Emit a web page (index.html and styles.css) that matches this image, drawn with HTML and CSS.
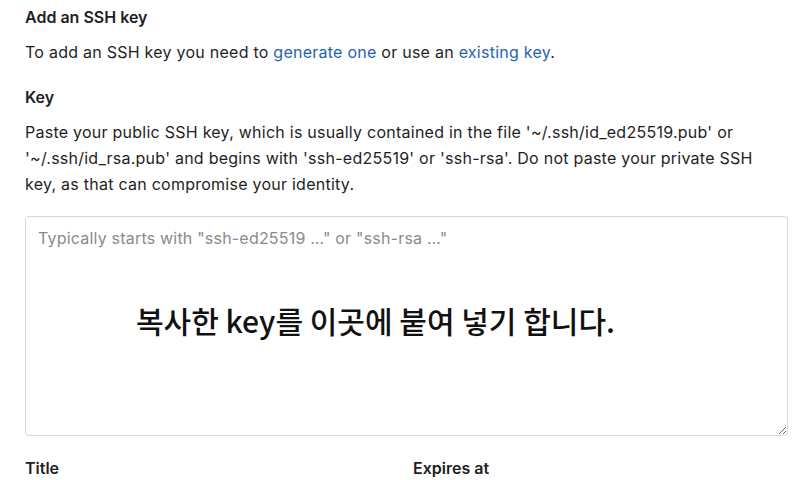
FILE: index.html
```html
<!DOCTYPE html>
<html lang="en">
<head>
    <meta charset="UTF-8">
    <meta name="viewport" content="width=device-width, initial-scale=1.0">
    <title>Add an SSH key</title>
    <link rel="stylesheet" href="styles.css">
</head>
<body>
    <div class="container">
        <h3 class="section-title">Add an SSH key</h3>
        <p class="intro">To add an SSH key you need to <a href="#">generate one</a> or use an <a href="#">existing key</a>.</p>

        <div class="form-group">
            <label class="form-label" for="key">Key</label>
            <p class="form-help">Paste your public SSH key, which is usually contained in the file '~/.ssh/id_ed25519.pub' or '~/.ssh/id_rsa.pub' and begins with 'ssh-ed25519' or 'ssh-rsa'. Do not paste your private SSH key, as that can compromise your identity.</p>
            <div class="key-box">
                <textarea id="key" class="form-input key-input" placeholder="Typically starts with &quot;ssh-ed25519 …&quot; or &quot;ssh-rsa …&quot;"></textarea>
                <div class="key-note">복사한 key를 이곳에 붙여 넣기 합니다.</div>
            </div>
        </div>

        <div class="form-row">
            <label class="form-label">Title</label>
            <label class="form-label">Expires at</label>
        </div>
    </div>
</body>
</html>
```

FILE: styles.css
```css
body {
    font-family: 'Inter', 'Liberation Sans', sans-serif;
    margin: 0;
    background: white;
    color: #1f1e24;
}
.container {
    padding: 6px 12px 0 25px;
}
.section-title {
    margin: 0;
    font-size: 16px;
    font-weight: 600;
    line-height: 22px;
}
.intro {
    margin: 13px 0 0;
    font-size: 16px;
    line-height: 22px;
    letter-spacing: 0.25px;
}
.intro a {
    color: #1f62b5;
    text-decoration: none;
}
.form-group {
    margin-top: 23px;
}
.form-label {
    display: block;
    font-size: 16px;
    font-weight: 600;
    line-height: 22px;
}
.form-help {
    margin: 11px 0 0;
    font-size: 16px;
    line-height: 26px;
    letter-spacing: 0.25px;
}
.key-box {
    position: relative;
    margin-top: 19px;
}
.form-input {
    width: 100%;
    box-sizing: border-box;
    border: 1px solid #d6d6d9;
    border-radius: 4px;
    font-family: 'Inter', 'Liberation Sans', sans-serif;
    font-size: 16px;
    color: #1f1e24;
}
.key-input {
    display: block;
    height: 220px;
    padding: 10px 12px;
    line-height: 22px;
    letter-spacing: 0.2px;
    resize: vertical;
}
.key-input::placeholder {
    color: #8a898f;
}
.key-note {
    position: absolute;
    left: 111px;
    top: 82px;
    font-family: 'Noto Sans CJK KR', 'Noto Sans', sans-serif;
    font-size: 30px;
    font-weight: 500;
    color: #111;
}
.form-row {
    display: grid;
    grid-template-columns: 388px 1fr;
    margin-top: 21px;
}
```
